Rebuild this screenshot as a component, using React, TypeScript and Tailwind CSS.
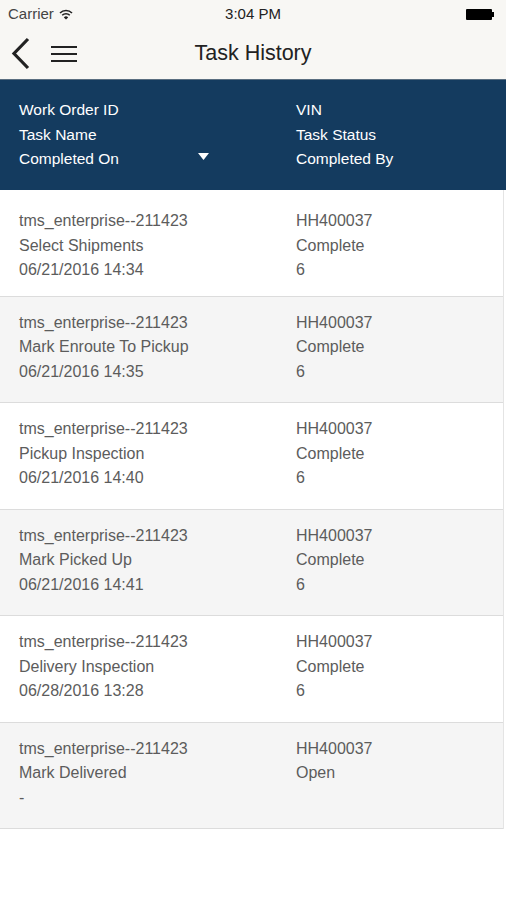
import React from 'react';

const rows = [
  { id: 'tms_enterprise--211423', task: 'Select Shipments', on: '06/21/2016 14:34', vin: 'HH400037', status: 'Complete', by: '6' },
  { id: 'tms_enterprise--211423', task: 'Mark Enroute To Pickup', on: '06/21/2016 14:35', vin: 'HH400037', status: 'Complete', by: '6' },
  { id: 'tms_enterprise--211423', task: 'Pickup Inspection', on: '06/21/2016 14:40', vin: 'HH400037', status: 'Complete', by: '6' },
  { id: 'tms_enterprise--211423', task: 'Mark Picked Up', on: '06/21/2016 14:41', vin: 'HH400037', status: 'Complete', by: '6' },
  { id: 'tms_enterprise--211423', task: 'Delivery Inspection', on: '06/28/2016 13:28', vin: 'HH400037', status: 'Complete', by: '6' },
  { id: 'tms_enterprise--211423', task: 'Mark Delivered', on: '-', vin: 'HH400037', status: 'Open', by: '' },
];

const App = () => {
  return (
    <div className="w-[506px] min-h-[900px] bg-white font-['Liberation_Sans',Arial,sans-serif]">
      {/* status bar */}
      <div className="h-[28px] bg-[#f8f7f4] relative flex items-center px-[8px] text-[15px] text-[#222]">
        <div className="flex items-center gap-[5px]">
          <span className="text-[#444]">Carrier</span>
          <svg width="14" height="11" viewBox="0 0 14 11">
            <path d="M1 4 A8.5 8.5 0 0 1 13 4" stroke="#222" strokeWidth="1.6" fill="none" />
            <path d="M3.2 6.3 A5.4 5.4 0 0 1 10.8 6.3" stroke="#222" strokeWidth="1.6" fill="none" />
            <path d="M7 10.5 L4.8 8.4 A3.1 3.1 0 0 1 9.2 8.4 Z" fill="#222" />
          </svg>
        </div>
        <div className="absolute left-0 right-0 text-center pointer-events-none">3:04 PM</div>
        <div className="ml-auto flex items-center mr-[4px]">
          <div className="w-[26px] h-[11px] bg-black rounded-[1px]" />
          <div className="w-[2px] h-[5px] bg-black" />
        </div>
      </div>

      {/* nav bar */}
      <div className="h-[51px] bg-[#f8f7f4] relative flex items-center">
        <svg width="26" height="36" viewBox="0 0 26 36" className="ml-[8px]">
          <path d="M20 3 L6 17.5 L20 32" stroke="#222" strokeWidth="3.2" fill="none" />
        </svg>
        <svg width="26" height="20" viewBox="0 0 26 20" className="ml-[17px]">
          <path d="M0 3 H26 M0 10 H26 M0 17 H26" stroke="#222" strokeWidth="2" />
        </svg>
        <div className="absolute left-0 right-0 text-center text-[21.5px] text-[#222] pointer-events-none">Task History</div>
      </div>

      {/* column header */}
      <div className="h-[111px] bg-[#143b5f] border-t border-[#5a6e80] flex pl-[19px] pt-[18px] text-[15.5px] leading-[24.5px] text-white">
        <div className="w-[277px] relative">
          <div>Work Order ID</div>
          <div>Task Name</div>
          <div>Completed On</div>
          <svg width="11" height="7" viewBox="0 0 11 7" className="absolute left-[179px] top-[55px]">
            <path d="M0 0 H11 L5.5 7 Z" fill="white" />
          </svg>
        </div>
        <div>
          <div>VIN</div>
          <div>Task Status</div>
          <div>Completed By</div>
        </div>
      </div>

      {/* rows */}
      <div className="w-[504px] border-r border-[#e4e4e4]">
        {rows.map((row, index) => (
          <div
            key={index}
            className={`h-[106.5px] border-b border-[#dcdcdc] flex pl-[19px] text-[16px] leading-[24.5px] text-[#5c5c5c] ${
              index % 2 === 0 ? 'bg-white' : 'bg-[#f5f5f5]'
            } ${index === 0 ? 'pt-[19px]' : 'pt-[14px]'}`}
          >
            <div className="w-[277px]">
              <div>{row.id}</div>
              <div>{row.task}</div>
              <div>{row.on}</div>
            </div>
            <div>
              <div>{row.vin}</div>
              <div>{row.status}</div>
              <div>{row.by}</div>
            </div>
          </div>
        ))}
      </div>
    </div>
  );
};

export default App;
